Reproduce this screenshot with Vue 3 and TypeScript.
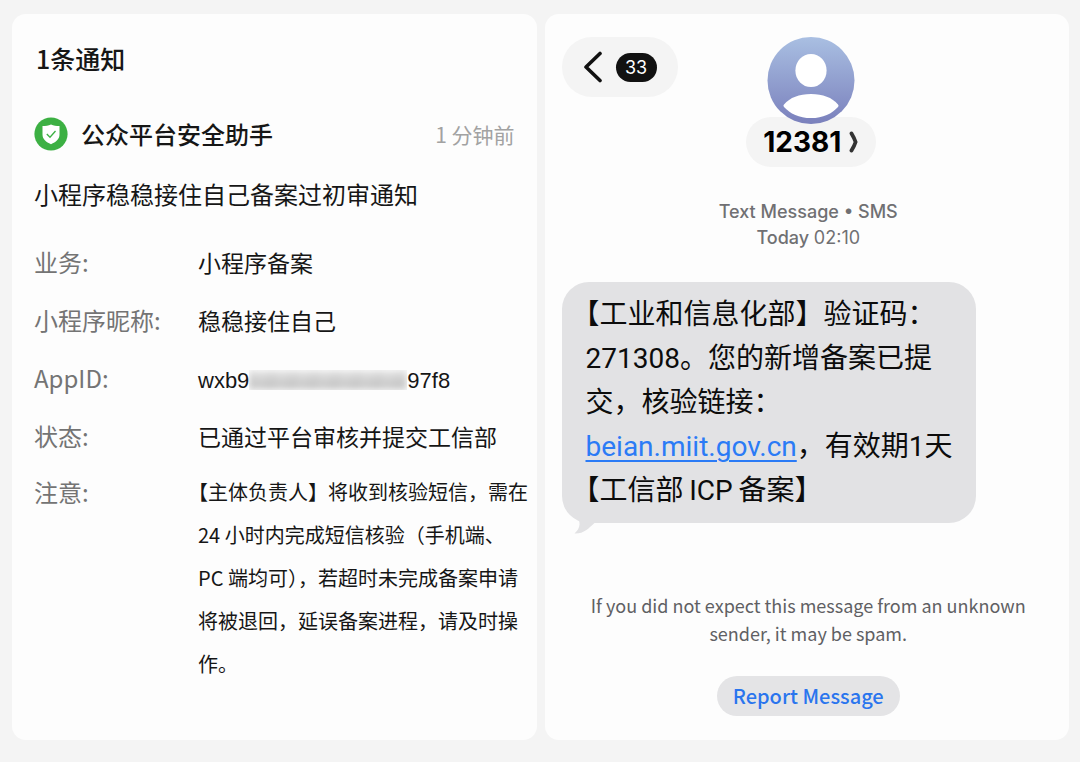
<script setup lang="ts">
interface Field {
  label: string
  value: string
}

const fields: Field[] = [
  { label: '业务:', value: '小程序备案' },
  { label: '小程序昵称:', value: '稳稳接住自己' },
]

const unread = 33
const sender = '12381'
</script>

<template>
  <main class="page">
    <section class="card notice">
      <h1 class="count">1条通知</h1>

      <header class="source">
        <svg class="shield" viewBox="0 0 34 34" aria-hidden="true">
          <circle cx="17" cy="17" r="16.6" fill="#3cb043" />
          <path d="M17 7.6c2.6 1.4 5.300 1.500 8.500 1.500v8.400c0 4.600-3.600 7.500-8.500 9.700-4.900-2.200-8.500-5.100-8.500-9.700V9.100c3.200 0 5.900-.1 8.500-1.500z" fill="#fff" />
          <path d="M12.800 17l3.200 3.300 5.500-6.300" fill="none" stroke="#3cb043" stroke-width="1.300" />
        </svg>
        <h2 class="source-name">公众平台安全助手</h2>
        <time class="ago">1 分钟前</time>
      </header>

      <p class="subject">小程序稳稳接住自己备案过初审通知</p>

      <dl class="fields">
        <div v-for="f in fields" :key="f.label" class="field">
          <dt>{{ f.label }}</dt>
          <dd>{{ f.value }}</dd>
        </div>
        <div class="field">
          <dt>AppID:</dt>
          <dd><span class="appid">wxb9<span class="mask"><i></i></span>97f8</span></dd>
        </div>
        <div class="field">
          <dt>状态:</dt>
          <dd>已通过平台审核并提交工信部</dd>
        </div>
        <div class="field note">
          <dt>注意:</dt>
          <dd>【主体负责人】将收到核验短信，需在 24 小时内完成短信核验（手机端、PC 端均可），若超时未完成备案申请将被退回，延误备案进程，请及时操作。</dd>
        </div>
      </dl>
    </section>

    <section class="card chat">
      <header class="top">
        <button class="back" type="button" aria-label="Back">
          <svg class="chevron" viewBox="0 0 20 32" aria-hidden="true">
            <path d="M17 2.500L3 16l14 13.500" fill="none" stroke="#111" stroke-width="3.600" stroke-linecap="round" stroke-linejoin="round" />
          </svg>
          <span class="badge">{{ unread }}</span>
        </button>

        <div class="contact">
          <svg class="avatar" viewBox="0 0 88 88" aria-hidden="true">
            <defs>
              <linearGradient id="avatar-fill" x1="0" y1="0" x2="0" y2="1">
                <stop offset="0" stop-color="#a9bfe2" />
                <stop offset="1" stop-color="#7a80bc" />
              </linearGradient>
            </defs>
            <circle cx="44" cy="43.500" r="43.500" fill="url(#avatar-fill)" />
            <ellipse cx="44" cy="33.500" rx="15.600" ry="16.600" fill="#fff" />
            <path d="M17 67.500C23 60.500 32 57 44 57s21 3.500 27 10.500c.8 1 .6 1.600 0 2.400C65 76.500 56 81 44 81s-21-4.500-27-11.100c-.6-.8-.8-1.400 0-2.400z" fill="#fff" />
          </svg>
          <button class="name" type="button">
            {{ sender }}
            <svg class="more" viewBox="0 0 9 22" aria-hidden="true">
              <path d="M2.500 2.500C4 5 6 9 6.600 11 6 13 4 17 2.500 19.500" fill="none" stroke="#333" stroke-width="3.800" stroke-linecap="round" />
            </svg>
          </button>
        </div>
      </header>

      <p class="stamp">Text Message • SMS<br />Today <span class="clock">02:10</span></p>

      <div class="bubble">
        <p class="message">【工业和信息化部】验证码：271308。您的新增备案已提交，核验链接：<a href="#">beian.miit.gov.cn</a>，有效期1天【工信部&thinsp;ICP&thinsp;备案】</p>
        <svg class="tail" viewBox="0 0 30 20" aria-hidden="true">
          <path d="M3 0C8 6 8 13 1.500 18.500c9 .5 14-5 20-10.500H30V0z" fill="#e2e2e4" />
        </svg>
      </div>

      <p class="hint">If you did not expect this message from an unknown sender, it may be spam.</p>
      <button class="report" type="button">Report Message</button>
    </section>
  </main>
</template>

<style>
body {
  margin: 0;
  background: #f4f4f4;
}
</style>

<style scoped>
.page {
  box-sizing: border-box;
  min-height: 100vh;
  padding: 14px 11px 22px 12px;
  display: grid;
  grid-template-columns: 1fr 1fr;
  gap: 8px;
  background: #f4f4f4;
  font-family: "Noto Sans CJK SC", sans-serif;
  color: #161616;
}

h1,
h2,
p,
dl,
dd {
  margin: 0;
}

button {
  border: 0;
  padding: 0;
  cursor: pointer;
}

svg {
  display: block;
}

.card {
  border-radius: 14px;
  background: #fdfdfd;
}

.notice {
  padding: 24px 8px 24px 22px;
}

.count {
  padding-left: 2px;
  font-size: 25px;
  line-height: 40px;
  font-weight: 500;
}

.source {
  display: flex;
  align-items: center;
  margin: 36px 14px 0 0;
  line-height: 40px;
}

.shield {
  width: 34px;
  height: 34px;
  margin-right: 13px;
}

.source-name {
  flex: 1;
  font-size: 24px;
  font-weight: 500;
}

.ago {
  font-size: 21px;
  color: #a2a2a2;
}

.subject {
  margin-top: 20px;
  font-size: 24px;
  line-height: 40px;
}

.fields {
  margin-top: 19px;
  font-size: 23px;
  line-height: 58px;
}

.field {
  display: grid;
  grid-template-columns: 164px 1fr;
}

dt {
  color: #747474;
  font-size: 24px;
}

.appid {
  font-family: "Liberation Sans", sans-serif;
  font-size: 22px;
  line-height: 22px;
}

.mask {
  display: inline-block;
  width: 158px;
  height: 20px;
  overflow: hidden;
  vertical-align: -2px;
}

.mask i {
  display: block;
  height: 20px;
  background:
    repeating-linear-gradient(100deg, #b8b8b820 0 6px, #dedede20 9px 14px, #c4c4c420 18px 21px),
    linear-gradient(#ececec, #cacaca 60%, #d0d0d0);
  filter: blur(3px);
}

.note {
  margin-top: 5px;
  line-height: 43px;
}

.note dd {
  font-size: 20px;
  text-spacing-trim: trim-start;
}

.chat {
  padding: 23px 14px 24px 17px;
  font-family: Inter, "Noto Sans CJK SC", sans-serif;
}

.top {
  display: grid;
  grid-template-columns: 116px 1fr 111px;
  align-items: start;
}

.back {
  display: flex;
  align-items: center;
  justify-content: center;
  gap: 13px;
  height: 60px;
  border-radius: 30px;
  background: #f4f4f4;
}

.chevron {
  width: 20px;
  height: 32px;
}

.badge {
  width: 41px;
  border-radius: 15px;
  background: #111;
  color: #fff;
  font-family: Inter, sans-serif;
  font-size: 18px;
  line-height: 29px;
}

.contact {
  display: flex;
  flex-direction: column;
  align-items: center;
}

.avatar {
  position: relative;
  width: 88px;
  height: 88px;
}

.name {
  display: flex;
  align-items: center;
  justify-content: center;
  gap: 8px;
  width: 130px;
  height: 50px;
  margin-top: -8px;
  border-radius: 25px;
  background: #f4f4f4;
  color: #000;
  font-family: Inter, sans-serif;
  font-size: 28px;
  font-weight: 700;
}

.more {
  width: 9px;
  height: 22px;
}

.stamp {
  margin-top: 32px;
  text-align: center;
  color: #707073;
  font-size: 18px;
  line-height: 26px;
  font-weight: 500;
}

.clock {
  font-weight: 400;
}

.bubble {
  position: relative;
  box-sizing: border-box;
  width: 84%;
  margin-top: 31px;
  padding: 11px 20px 10px 24px;
  border-radius: 27px;
  background: #e2e2e4;
}

.message {
  color: #0c0c0c;
  font-size: 28px;
  line-height: 44px;
  font-family: Roboto, "Noto Sans CJK SC", sans-serif;
  text-spacing-trim: trim-start;
}

.message a {
  color: #2b7bf6;
  text-decoration-thickness: 2px;
  text-underline-offset: 4px;
}

.tail {
  position: absolute;
  left: 11px;
  bottom: -12px;
  width: 30px;
  height: 20px;
}

.hint {
  margin: 68px 16px 0;
  text-align: center;
  color: #606063;
  font-family: "Noto Sans CJK SC", sans-serif;
  font-size: 18px;
  line-height: 28px;
}

.report {
  display: block;
  width: 183px;
  height: 40px;
  margin: 29px auto 0;
  padding-bottom: 2px;
  border-radius: 20px;
  background: #e4e4e6;
  color: #2a75ee;
  font-family: "Noto Sans CJK SC", sans-serif;
  font-size: 20px;
  font-weight: 500;
}
</style>
